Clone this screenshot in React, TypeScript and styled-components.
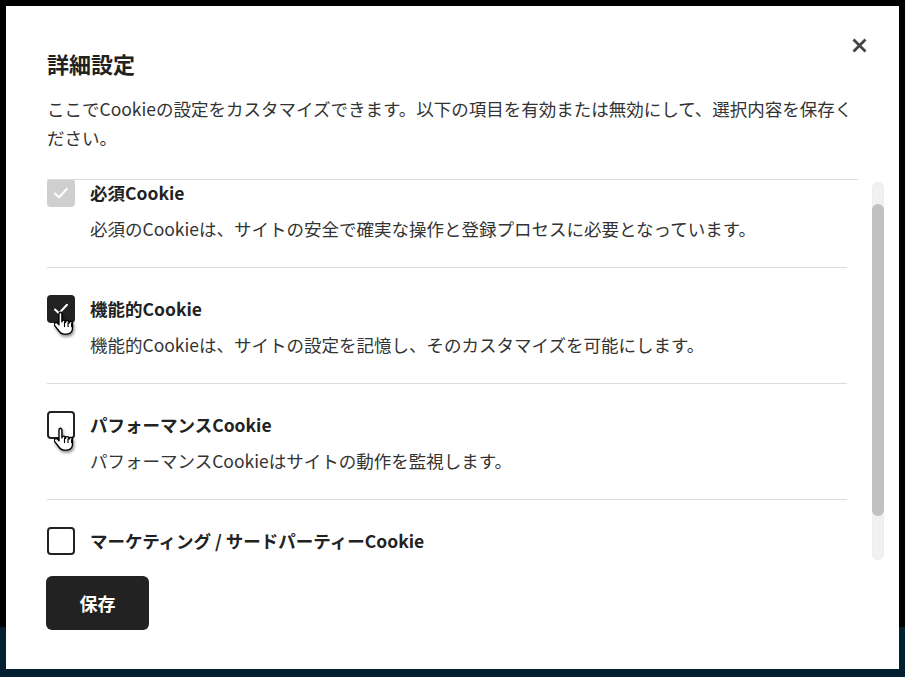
import React, { useLayoutEffect, useRef } from "react";
import styled, { createGlobalStyle } from "styled-components";

const GlobalStyle = createGlobalStyle`
  html, body { margin: 0; padding: 0; }
  body {
    font-family: "Noto Sans CJK JP", "Noto Sans", sans-serif;
    background: #000;
  }
  * { box-sizing: border-box; }
`;

const Backdrop = styled.div`
  width: 905px;
  height: 677px;
  padding: 6px 6px 8px 6px;
  background: linear-gradient(to bottom, #000 0, #000 627px, #03202f 627px, #03202f 100%);
  overflow: hidden;
`;

const Modal = styled.div`
  position: relative;
  width: 893px;
  height: 663px;
  background: #fff;
  padding: 41px 41px 39px 41px;
  display: flex;
  flex-direction: column;
`;

const CloseButton = styled.button`
  position: absolute;
  top: 25px;
  right: 26px;
  width: 28px;
  height: 28px;
  border: 0;
  background: transparent;
  padding: 0;
  display: flex;
  align-items: center;
  justify-content: center;
  cursor: pointer;
`;

const Header = styled.div`
  padding-bottom: 27px;
  border-bottom: 1px solid #dcdcdc;
`;

const Title = styled.h2`
  margin: 0;
  font-size: 22px;
  line-height: 32px;
  font-weight: 700;
  color: #222;
`;

const Description = styled.p`
  margin: 15px 0 0 0;
  font-size: 17.5px;
  line-height: 29px;
  color: #333;
`;

const Body = styled.div`
  display: flex;
  height: 380px;
  margin-right: -26px;
`;

const Viewport = styled.div`
  flex: 1;
  overflow: hidden;
`;

const Track = styled.div`
  flex: none;
  width: 12px;
  margin: 2px 0 0 25px;
  border-radius: 6px;
  background: #f1f1f1;
  box-shadow: inset 0 0 2px rgba(0, 0, 0, 0.06);
  display: flex;
  flex-direction: column;
`;

const Thumb = styled.div`
  width: 12px;
  border-radius: 6px;
  background: #c1c1c1;
`;

const Item = styled.div<{ $last?: boolean }>`
  padding: 27px 0 24px 0;
  border-bottom: ${(p) => (p.$last ? "none" : "1px solid #dcdcdc")};
`;

const ItemHead = styled.label`
  display: flex;
  align-items: center;
  gap: 15px;
  height: 28px;
`;

const BoxWrap = styled.span`
  position: relative;
  display: inline-flex;
  width: 28px;
  height: 28px;
  flex: none;
`;

const Box = styled.span<{ $state: "disabled" | "checked" | "empty" }>`
  width: 28px;
  height: 28px;
  border-radius: 4px;
  display: flex;
  align-items: center;
  justify-content: center;
  background: ${(p) =>
    p.$state === "disabled" ? "#cfcfcf" : p.$state === "checked" ? "#222" : "#fff"};
  border: ${(p) => (p.$state === "empty" ? "2px solid #222" : "none")};
`;

const Cursor = styled.svg`
  position: absolute;
  left: 7px;
  top: 16px;
  width: 21px;
  height: 27px;
  filter: drop-shadow(1px 2px 1.5px rgba(0, 0, 0, 0.45));
`;

const ItemTitle = styled.span`
  font-size: 17.5px;
  line-height: 28px;
  font-weight: 700;
  color: #222;
`;

const ItemDesc = styled.p`
  margin: 8px 0 0 43px;
  font-size: 17.5px;
  line-height: 28px;
  color: #333;
`;

const SaveButton = styled.button`
  margin-top: 16px;
  align-self: flex-start;
  margin-left: -1px;
  width: 103px;
  height: 54px;
  border: 0;
  border-radius: 6px;
  background: #222;
  color: #fff;
  font-family: "Noto Sans CJK JP", "Noto Sans", sans-serif;
  font-size: 18px;
  line-height: 28px;
  font-weight: 700;
  padding: 0;
  cursor: pointer;
`;

const Check = () => (
  <svg width="18" height="18" viewBox="0 0 18 18">
    <path d="M3 9.5 L7 13.2 L15 4.8" fill="none" stroke="#fff" strokeWidth="2" strokeLinecap="round" strokeLinejoin="round" />
  </svg>
);

const Hand = () => (
  <Cursor viewBox="0 0 20 26">
    <path
      d="M6.5 1.2c-1 0-1.8.8-1.8 1.8v10.2l-1.6-1.6c-.7-.7-1.8-.7-2.4 0-.7.7-.7 1.7-.1 2.4l4.6 6c1.1 1.4 2.6 2.2 4.3 2.2h2.8c3 0 5.4-2.4 5.4-5.4v-5c0-.9-.8-1.7-1.7-1.7s-1.7.8-1.7 1.7v-.8c0-.9-.8-1.7-1.7-1.7s-1.7.8-1.7 1.7v-.5c0-.9-.8-1.7-1.7-1.7s-1.7.8-1.7 1.7V3c0-1-.8-1.8-1.8-1.8z"
      fill="#fff"
      stroke="#000"
      strokeWidth="1.3"
      strokeLinejoin="round"
    />
    <path d="M10 10.5v4.5M13.4 11.3v3.7M16.8 12v3" stroke="#000" strokeWidth="1.1" strokeLinecap="round" />
  </Cursor>
);

type Row = {
  title: string;
  desc?: string;
  state: "disabled" | "checked" | "empty";
  hand?: boolean;
};

const rows: Row[] = [
  {
    title: "必須Cookie",
    desc: "必須のCookieは、サイトの安全で確実な操作と登録プロセスに必要となっています。",
    state: "disabled",
  },
  {
    title: "機能的Cookie",
    desc: "機能的Cookieは、サイトの設定を記憶し、そのカスタマイズを可能にします。",
    state: "checked",
    hand: true,
  },
  {
    title: "パフォーマンスCookie",
    desc: "パフォーマンスCookieはサイトの動作を監視します。",
    state: "empty",
    hand: true,
  },
  {
    title: "マーケティング / サードパーティーCookie",
    state: "empty",
  },
];

export default function App() {
  const ref = useRef<HTMLDivElement>(null);
  useLayoutEffect(() => {
    if (ref.current) ref.current.scrollTop = 28;
  }, []);
  return (
    <>
      <GlobalStyle />
      <Backdrop>
        <Modal>
          <CloseButton aria-label="閉じる">
            <svg width="15" height="15" viewBox="0 0 15 15">
              <path d="M1.5 1.5 L13.5 13.5 M13.5 1.5 L1.5 13.5" stroke="#444" strokeWidth="2.8" />
            </svg>
          </CloseButton>
          <Header>
            <Title>詳細設定</Title>
            <Description>
              ここでCookieの設定をカスタマイズできます。以下の項目を有効または無効にして、選択内容を保存ください。
            </Description>
          </Header>
          <Body>
            <Viewport ref={ref}>
              {rows.map((r, i) => (
                <Item key={r.title} $last={i === rows.length - 1}>
                  <ItemHead>
                    <BoxWrap>
                      <Box $state={r.state}>{r.state !== "empty" && <Check />}</Box>
                      {r.hand && <Hand />}
                    </BoxWrap>
                    <ItemTitle>{r.title}</ItemTitle>
                  </ItemHead>
                  {r.desc && <ItemDesc>{r.desc}</ItemDesc>}
                </Item>
              ))}
            </Viewport>
            <Track>
              <Thumb style={{ marginTop: 22, height: 312 }} />
            </Track>
          </Body>
          <SaveButton>保存</SaveButton>
        </Modal>
      </Backdrop>
    </>
  );
}
